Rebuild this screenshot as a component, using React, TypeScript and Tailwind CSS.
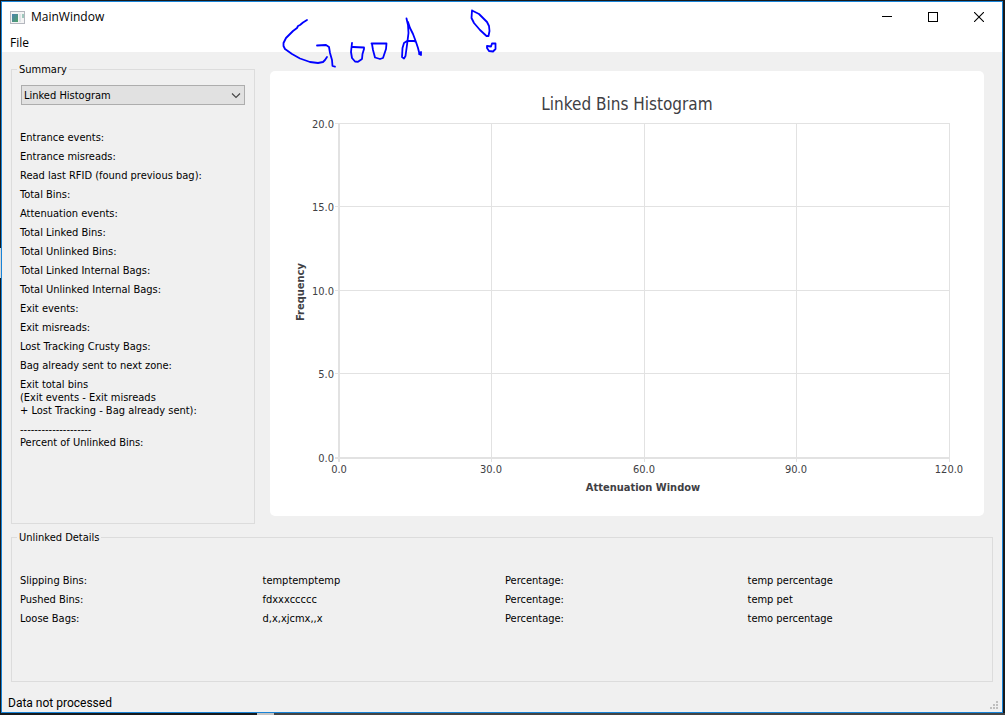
import React from "react";

const summaryRows: string[] = [
  "Entrance events:",
  "Entrance misreads:",
  "Read last RFID (found previous bag):",
  "Total Bins:",
  "Attenuation events:",
  "Total Linked Bins:",
  "Total Unlinked Bins:",
  "Total Linked Internal Bags:",
  "Total Unlinked Internal Bags:",
  "Exit events:",
  "Exit misreads:",
  "Lost Tracking Crusty Bags:",
  "Bag already sent to next zone:",
  "Exit total bins\n(Exit events - Exit misreads\n+ Lost Tracking - Bag already sent):",
  "--------------------\nPercent of Unlinked Bins:",
];

const details = [
  ["Slipping Bins:", "temptemptemp", "Percentage:", "temp percentage"],
  ["Pushed Bins:", "fdxxxccccc", "Percentage:", "temp pet"],
  ["Loose Bags:", "d,x,xjcmx,,x", "Percentage:", "temo percentage"],
];

const xTicks = [
  { x: 69, label: "0.0" },
  { x: 221, label: "30.0" },
  { x: 374, label: "60.0" },
  { x: 526, label: "90.0" },
  { x: 679, label: "120.0" },
];

const yTicks = [
  { y: 53, label: "20.0" },
  { y: 136, label: "15.0" },
  { y: 220, label: "10.0" },
  { y: 303, label: "5.0" },
  { y: 387, label: "0.0" },
];

function TitleBar() {
  return (
    <div className="flex h-[30px] items-center pl-2">
      <svg width="15" height="13" viewBox="0 0 15 13" aria-hidden="true">
        <defs>
          <linearGradient id="pane" x1="0" y1="0" x2="1" y2="1">
            <stop offset="0" stopColor="#4a82b0" />
            <stop offset="1" stopColor="#4fa067" />
          </linearGradient>
        </defs>
        <rect x="0.5" y="0.5" width="14" height="12" fill="#f4f4f4" stroke="#b4b7be" />
        <rect x="2" y="3" width="6" height="8" fill="url(#pane)" />
        <rect x="9" y="3" width="2" height="8" fill="#dfe3e6" />
        <rect x="12" y="3" width="2" height="4" fill="#9fc8bd" />
      </svg>
      <h1 className="ml-[6px] font-['Open_Sans',sans-serif] text-[12px] leading-4">MainWindow</h1>
      <div className="ml-auto flex h-full">
        <button aria-label="Minimize" className="flex w-[46px] items-center justify-center">
          <svg width="10" height="10" viewBox="0 0 10 10" shapeRendering="crispEdges">
            <path d="M0 4.5H10" stroke="#000" />
          </svg>
        </button>
        <button aria-label="Maximize" className="flex w-[46px] items-center justify-center">
          <svg width="10" height="10" viewBox="0 0 10 10" shapeRendering="crispEdges">
            <rect x="0.5" y="0.5" width="9" height="9" fill="none" stroke="#000" />
          </svg>
        </button>
        <button aria-label="Close" className="flex w-[46px] items-center justify-center">
          <svg width="10" height="10" viewBox="0 0 10 10">
            <path d="M0 0L10 10M10 0L0 10" stroke="#000" strokeWidth="1.1" />
          </svg>
        </button>
      </div>
    </div>
  );
}

function Scribble() {
  return (
    <svg
      className="pointer-events-none absolute left-[268px] top-0"
      width="240"
      height="72"
      viewBox="270 2 240 72"
      fill="none"
      stroke="#0000ff"
      strokeWidth="1.8"
      strokeLinecap="round"
      strokeLinejoin="round"
      aria-hidden="true"
    >
      <path d="M307 20L303 22.500L300 25L298 26L297 28L293 31L286 38L283.500 43L283.500 46L285 49L292 54L300 58.500L310 62L318 63L323 62L325 60L327 57" />
      <path d="M317 45.500L326 45L329 47L330 53L332 60L332.500 66L335 66.700" />
      <path d="M352 43L351 52L352 58L355 61.500L358 61.800L362 59L362.500 54L364 49V47.500L353 47" />
      <path d="M371.500 43.500H386.500L386 49L383 58L380 59L375 57.500L373 50L372 44" />
      <path d="M406.500 18.500L408 25L408.500 33L407 45L405.500 56L404 58.500L402 57L402.500 48L404 43L407 41H414L416 42L413 34L410 28L408 22M416 42L418 48L419.500 54L421 52V55L419 54" />
      <path d="M472 10.500L471.500 18L474 23L480 30L486.500 36L488.500 36L489.500 31L489 26L487 22L479 14L472 10.500" />
      <path d="M487 46L491 46.500L492 43.500H495.500V49L493 51.500L489 51L487 48Z" />
    </svg>
  );
}

function GroupBox({ id, title, className, children }: { id: string; title: string; className: string; children: React.ReactNode }) {
  return (
    <fieldset className={`min-w-0 border border-[#dcdcdc] px-2 ${className}`}>
      <legend id={id} className="-ml-[3px] px-[2px] pt-px leading-[14px]">
        {title}
      </legend>
      {children}
    </fieldset>
  );
}

function Histogram() {
  return (
    <svg className="h-full w-full" viewBox="0 0 714 445" role="img" aria-label="Linked Bins Histogram">
      <g stroke="#e2e2e2" shapeRendering="crispEdges">
        {xTicks.map((t) => (
          <path key={t.x} d={`M${t.x + 0.5} 53V391`} />
        ))}
        {yTicks.map((t) => (
          <path key={t.y} d={`M65 ${t.y - 0.5}H680`} />
        ))}
        <path d="M69 53V391" strokeWidth="2" />
        <path d="M65 387H680" strokeWidth="2" />
      </g>
      <g fill="#404044" fontSize="11">
        <text x="357" y="39" textAnchor="middle" fontSize="17">
          Linked Bins Histogram
        </text>
        {yTicks.map((t) => (
          <text key={t.y} x="64" y={t.y + 4} textAnchor="end">
            {t.label}
          </text>
        ))}
        {xTicks.map((t) => (
          <text key={t.x} x={t.x} y="402" textAnchor="middle">
            {t.label}
          </text>
        ))}
        <text x="373" y="420" textAnchor="middle" fontWeight="bold">
          Attenuation Window
        </text>
        <text transform="translate(34 221) rotate(-90)" textAnchor="middle" fontWeight="bold">
          Frequency
        </text>
      </g>
    </svg>
  );
}

export default function App() {
  return (
    <div className="relative flex min-h-screen flex-col bg-[#171a1c] pt-px pr-[2px] pb-[2px] pl-px font-['DejaVu_Sans_Condensed','Noto_Sans',sans-serif] text-[11px] leading-[13px] text-black">
      <div className="absolute left-0 top-[248px] h-[30px] w-px bg-[#d8d8d8]" />
      <div className="absolute bottom-0 left-[257px] right-0 h-[2px] bg-[#444]" />
      <div className="absolute bottom-0 left-[257px] h-[2px] w-[17px] bg-[#c4c4c4]" />
      <div className="relative flex flex-1 flex-col border border-[#1883d7] bg-[#f0f0f0]">
        <header className="bg-white">
          <TitleBar />
          <nav className="flex h-5 items-end pb-px">
            <button className="px-2 font-['Open_Sans',sans-serif] text-[12px] leading-4">File</button>
          </nav>
        </header>
        <Scribble />
        <main className="flex flex-1 flex-col gap-[6px] px-[9px] pt-[10px]">
          <div className="flex flex-1 gap-[15px]">
            <GroupBox id="summary" title="Summary" className="w-[244px] shrink-0">
              <div className="relative mx-px mt-2">
                <select
                  aria-labelledby="summary"
                  className="block h-5 w-full appearance-none border border-[#adadad] bg-[#e1e1e1] px-[2px] pt-px leading-[14px]"
                >
                  <option>Linked Histogram</option>
                </select>
                <svg
                  className="pointer-events-none absolute right-1 top-2"
                  width="10"
                  height="6"
                  viewBox="0 0 10 6"
                  fill="none"
                  stroke="#444"
                  strokeWidth="1.1"
                  aria-hidden="true"
                >
                  <path d="M1 0.500L5 4.500L9 0.500" />
                </svg>
              </div>
              <ul className="mt-[26px] flex flex-col gap-[6px] whitespace-pre">
                {summaryRows.map((row) => (
                  <li key={row}>{row}</li>
                ))}
              </ul>
            </GroupBox>
            <div className="mt-[9px] mr-[9px] mb-2 h-[445px] min-w-0 flex-1 rounded-[5px] bg-white">
              <Histogram />
            </div>
          </div>
          <GroupBox id="unlinked" title="Unlinked Details" className="min-h-[152px]">
            <div className="mt-[29px] flex flex-col gap-[6px]">
              {details.map((row) => (
                <div key={row[0]} className="grid grid-cols-4 gap-[6px]">
                  {row.map((cell, i) => (
                    <span key={i}>{cell}</span>
                  ))}
                </div>
              ))}
            </div>
          </GroupBox>
        </main>
        <footer className="flex h-[30px] items-center justify-between pt-3 pl-[6px]">
          <span className="font-['Roboto',sans-serif] text-[12px] leading-4">Data not processed</span>
          <svg className="mt-1 mr-1" width="8" height="8" viewBox="0 0 8 8" fill="#bfbfbf" aria-hidden="true">
            <path d="M6 0h2v2h-2zM3 3h2v2h-2zM6 3h2v2h-2zM0 6h2v2h-2zM3 6h2v2h-2zM6 6h2v2h-2z" />
          </svg>
        </footer>
      </div>
    </div>
  );
}
